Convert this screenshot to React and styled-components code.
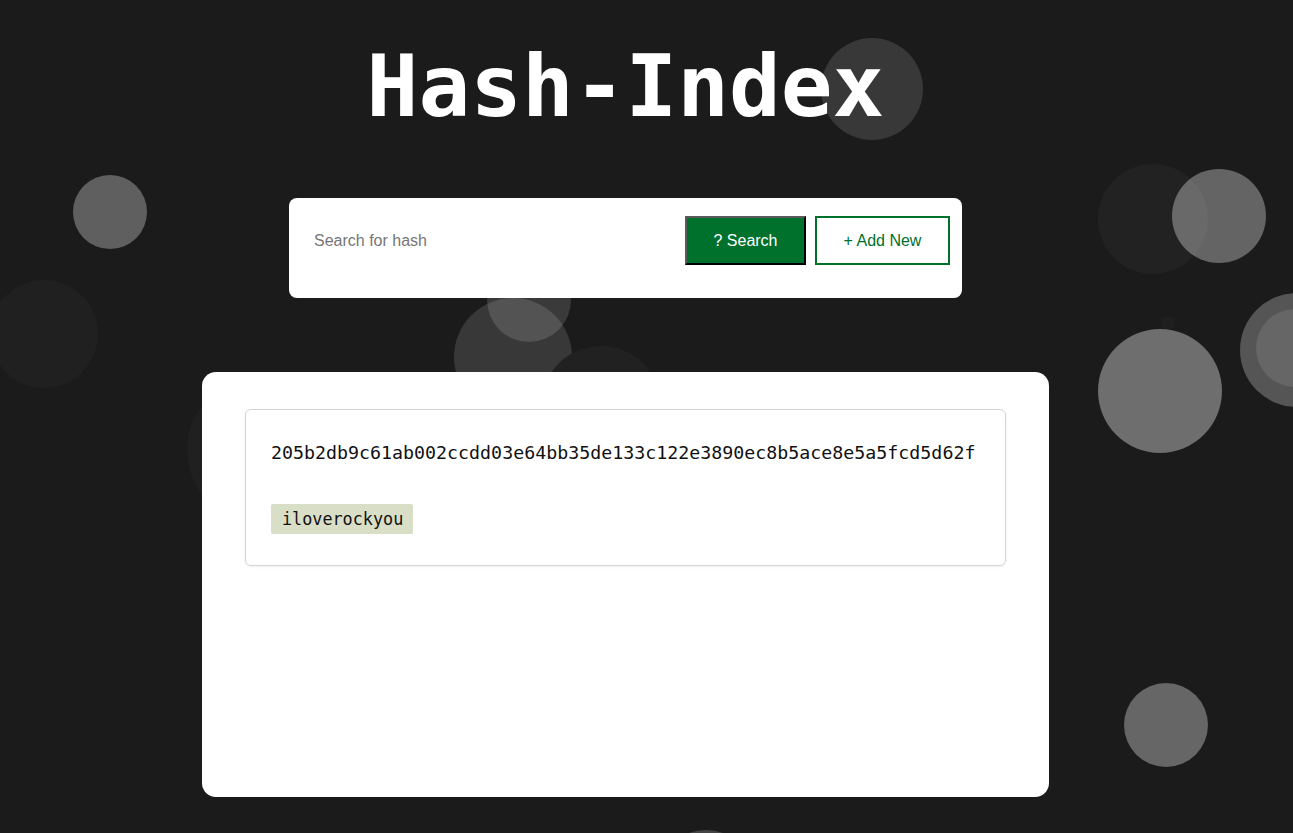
import React from 'react';
import styled, { createGlobalStyle } from 'styled-components';

const GlobalStyle = createGlobalStyle`
  html, body {
    margin: 0;
    padding: 0;
    background: #1b1b1b;
  }

  body {
    font-family: "Liberation Sans", Arial, sans-serif;
    overflow: hidden;
  }
`;

const Page = styled.div`
  position: relative;
  width: 1293px;
  min-height: 833px;
  overflow: hidden;
  background: #1b1b1b;
`;

const Bubble = styled.div`
  position: absolute;
  border-radius: 50%;
  background: ${(props) => props.color};
  z-index: 0;
`;

const Content = styled.main`
  position: relative;
  z-index: 1;
  width: 1251px;
  display: flex;
  flex-direction: column;
  align-items: center;
`;

const Title = styled.h1`
  margin: 26px 0 0;
  font-family: "DejaVu Sans Mono", "Liberation Mono", monospace;
  font-weight: bold;
  font-size: 86px;
  line-height: 120px;
  color: #ffffff;
  letter-spacing: 0;
`;

const SearchBar = styled.form`
  margin-top: 52px;
  width: 673px;
  height: 100px;
  box-sizing: border-box;
  background: #ffffff;
  border-radius: 8px;
  padding: 0 12px 15px 25px;
  display: flex;
  align-items: center;
  gap: 9px;
`;

const SearchInput = styled.input`
  flex: 1;
  min-width: 0;
  border: none;
  outline: none;
  padding: 0;
  background: transparent;
  font-family: "Liberation Sans", Arial, sans-serif;
  font-size: 16px;
  color: #333;

  &::placeholder {
    color: #767676;
  }
`;

const Button = styled.button`
  height: 49px;
  width: ${(props) => (props.$primary ? '121px' : '135px')};
  box-sizing: border-box;
  padding: 0;
  font-family: "Liberation Sans", Arial, sans-serif;
  font-size: 16px;
  cursor: pointer;
  background: ${(props) => (props.$primary ? '#00702d' : '#ffffff')};
  color: ${(props) => (props.$primary ? '#ffffff' : '#00702d')};
  border: 2px solid #00702d;
  ${(props) => props.$primary && 'border-color: #5a5a5a #000000 #000000 #5a5a5a;'}
`;

const Card = styled.section`
  margin-top: 74px;
  width: 847px;
  height: 425px;
  box-sizing: border-box;
  background: #ffffff;
  border-radius: 14px;
  padding: 37px 43px;
`;

const ResultBox = styled.div`
  border: 1px solid #d4d4d4;
  border-radius: 6px;
  box-shadow: 0 1px 3px rgba(0, 0, 0, 0.06);
  padding: 29px 25px 31px;
  display: flex;
  flex-direction: column;
  align-items: flex-start;
  gap: 37px;
`;

const Hash = styled.div`
  font-family: "DejaVu Sans Mono", "Liberation Mono", monospace;
  font-size: 18.3px;
  line-height: 28px;
  color: #111;
`;

const Plain = styled.span`
  display: inline-block;
  background: #d9dec6;
  border-radius: 2px;
  padding: 0 10px 0 11px;
  height: 30px;
  line-height: 30px;
  font-family: "DejaVu Sans Mono", "Liberation Mono", monospace;
  font-size: 16.8px;
  color: #111;
`;

const bubbles = [
  { x: 872, y: 89, r: 51, c: '#383838' },
  { x: 110, y: 212, r: 37, c: '#5f5f5f' },
  { x: 44, y: 334, r: 54, c: '#202020' },
  { x: 1153, y: 219, r: 55, c: '#222222' },
  { x: 1219, y: 216, r: 47, c: 'rgba(255,255,255,0.32)' },
  { x: 1168, y: 323, r: 7, c: '#1f1f1f' },
  { x: 1160, y: 391, r: 62, c: '#6e6e6e' },
  { x: 1297, y: 350, r: 57, c: '#555555' },
  { x: 1295, y: 348, r: 39, c: '#666666' },
  { x: 1166, y: 725, r: 42, c: '#666666' },
  { x: 529, y: 300, r: 42, c: '#3a3a3a' },
  { x: 513, y: 357, r: 59, c: 'rgba(255,255,255,0.13)' },
  { x: 601, y: 406, r: 60, c: '#212121' },
  { x: 260, y: 450, r: 73, c: '#202020' },
  { x: 706, y: 880, r: 50, c: '#444444' },
];

const App = () => (
  <Page>
    <GlobalStyle />
    {bubbles.map((b, i) => (
      <Bubble
        key={i}
        color={b.c}
        style={{ left: b.x - b.r, top: b.y - b.r, width: b.r * 2, height: b.r * 2 }}
      />
    ))}
    <Content>
      <Title>Hash-Index</Title>
      <SearchBar onSubmit={(e) => e.preventDefault()}>
        <SearchInput type='text' placeholder='Search for hash' />
        <Button type='submit' $primary>
          ? Search
        </Button>
        <Button type='button'>+ Add New</Button>
      </SearchBar>
      <Card>
        <ResultBox>
          <Hash>205b2db9c61ab002ccdd03e64bb35de133c122e3890ec8b5ace8e5a5fcd5d62f</Hash>
          <Plain>iloverockyou</Plain>
        </ResultBox>
      </Card>
    </Content>
  </Page>
);

export default App;
